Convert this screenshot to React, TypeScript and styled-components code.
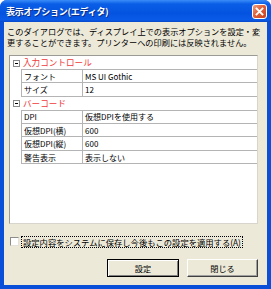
import React from "react";
import styled, { createGlobalStyle } from "styled-components";

const Global = createGlobalStyle`
  html, body { margin: 0; padding: 0; background: #ffffff; }
  body { font-family: "Noto Sans CJK JP", "Noto Sans", sans-serif; }
`;

const Frame = styled.div`
  width: 271px;
  height: 289px;
  box-sizing: border-box;
  display: flex;
  flex-direction: column;
  background: #0a4fd8;
  border-radius: 7px 7px 0 0;
  overflow: hidden;
`;

const TitleBar = styled.div`
  height: 22px;
  flex: none;
  display: flex;
  align-items: center;
  justify-content: space-between;
  padding: 0 4px 0 6px;
  background: linear-gradient(to bottom, #3a8cf8 0%, #0a5ee6 18%, #0453e0 60%, #0a5ae8 90%, #0848c8 100%);
`;

const Title = styled.span`
  color: #ffffff;
  font-size: 9px;
  font-weight: bold;
  letter-spacing: -0.2px;
  text-shadow: 1px 1px 0 #0a2f8a;
  line-height: 1;
  margin-top: 1px;
`;

const CloseButton = styled.div`
  width: 15px;
  height: 15px;
  box-sizing: border-box;
  border: 1px solid #ffffff;
  border-radius: 3px;
  background: linear-gradient(to bottom right, #f0a080 0%, #e0603a 45%, #c8401c 100%);
  display: flex;
  align-items: center;
  justify-content: center;
  margin-top: 1px;
`;

const Client = styled.div`
  flex: 1;
  margin: 0 4px 4px 4px;
  background: #ece9d8;
  display: flex;
  flex-direction: column;
  padding: 0 9px 0 0;
`;

const Description = styled.div`
  margin: 4px 0 0 3px;
  display: flex;
  flex-direction: column;
`;

const DescLine = styled.span`
  display: block;
  font-size: 8.2px;
  line-height: 11px;
  height: 11px;
  color: #000000;
  white-space: nowrap;
`;

const Grid = styled.div`
  margin: 7px 0 0 5px;
  height: 169px;
  box-sizing: border-box;
  background: #ffffff;
  border: 1px solid #9c9a94;
  border-right-color: #d8d6cc;
  border-bottom-color: #d8d6cc;
  display: flex;
  flex-direction: column;
`;

const Row = styled.div`
  display: grid;
  grid-template-columns: 11px 61px 1fr;
  height: 13.5px;
  flex: none;
`;

const Margin = styled.div`
  display: flex;
  align-items: center;
  justify-content: flex-end;
  padding-right: 1px;
`;

const Toggle = styled.div`
  width: 7px;
  height: 7px;
  box-sizing: border-box;
  border: 1px solid #8a8a8a;
  background: #ffffff;
  position: relative;
  &::after {
    content: "";
    position: absolute;
    left: 1px;
    top: 2px;
    width: 3px;
    height: 1px;
    background: #000;
  }
`;

const CategoryLabel = styled.div`
  grid-column: 2 / 4;
  color: #f03a3a;
  font-size: 8.6px;
  line-height: 13px;
  padding-left: 2px;
  border-bottom: 1px solid #b4b4b4;
`;

const Cell = styled.div`
  font-size: 8px;
  line-height: 13px;
  padding-left: 2px;
  color: #000;
  white-space: nowrap;
  overflow: hidden;
  border-bottom: 1px solid #b4b4b4;
  border-left: 1px solid #b4b4b4;
`;

const CheckRow = styled.div`
  margin: 12px 0 0 6px;
  display: flex;
  align-items: center;
  gap: 3px;
  height: 11px;
`;

const CheckBox = styled.div`
  width: 9px;
  height: 9px;
  box-sizing: border-box;
  background: #ffffff;
  border: 1px solid #8c8c8c;
  border-right-color: #e4e2da;
  border-bottom-color: #e4e2da;
`;

const CheckLabel = styled.span`
  font-size: 8.3px;
  line-height: 10px;
  color: #000;
  white-space: nowrap;
  outline: 1px dotted #000;
  padding: 0 1px;
`;

const ButtonRow = styled.div`
  margin-top: 12px;
  display: flex;
  justify-content: flex-end;
  gap: 8px;
`;

const Button = styled.div<{ $default?: boolean }>`
  width: ${(p) => (p.$default ? "72px" : "71px")};
  height: 18px;
  box-sizing: border-box;
  display: flex;
  align-items: center;
  justify-content: center;
  font-size: 8.2px;
  color: #000;
  background: #ece9d8;
  border: 1px solid;
  border-color: ${(p) => (p.$default ? "#000000" : "#ffffff #404040 #404040 #ffffff")};
  box-shadow: ${(p) =>
    p.$default
      ? "inset 1px 1px 0 #ffffff, inset -1px -1px 0 #808080"
      : "inset -1px -1px 0 #a0a0a0"};
`;

type Prop = { name: string; value: string };
const sections: { title: string; props: Prop[] }[] = [
  {
    title: "入力コントロール",
    props: [
      { name: "フォント", value: "MS UI Gothic" },
      { name: "サイズ", value: "12" },
    ],
  },
  {
    title: "バーコード",
    props: [
      { name: "DPI", value: "仮想DPIを使用する" },
      { name: "仮想DPI(横)", value: "600" },
      { name: "仮想DPI(縦)", value: "600" },
      { name: "警告表示", value: "表示しない" },
    ],
  },
];

export default function App() {
  return (
    <>
      <Global />
      <Frame>
        <TitleBar>
          <Title>表示オプション(エディタ)</Title>
          <CloseButton>
            <svg width="9" height="9" viewBox="0 0 9 9">
              <path d="M1.5 1.5 L7.5 7.5 M7.5 1.5 L1.5 7.5" stroke="#ffffff" strokeWidth="1.8" strokeLinecap="square" />
            </svg>
          </CloseButton>
        </TitleBar>
        <Client>
          <Description>
            <DescLine>このダイアログでは、ディスプレイ上での表示オプションを設定・変</DescLine>
            <DescLine>更することができます。プリンターへの印刷には反映されません。</DescLine>
          </Description>
          <Grid>
            {sections.map((s) => (
              <React.Fragment key={s.title}>
                <Row>
                  <Margin>
                    <Toggle />
                  </Margin>
                  <CategoryLabel>{s.title}</CategoryLabel>
                </Row>
                {s.props.map((p) => (
                  <Row key={p.name}>
                    <Margin />
                    <Cell>{p.name}</Cell>
                    <Cell>{p.value}</Cell>
                  </Row>
                ))}
              </React.Fragment>
            ))}
          </Grid>
          <CheckRow>
            <CheckBox />
            <CheckLabel>設定内容をシステムに保存し今後もこの設定を適用する(A)</CheckLabel>
          </CheckRow>
          <ButtonRow>
            <Button $default>設定</Button>
            <Button>閉じる</Button>
          </ButtonRow>
        </Client>
      </Frame>
    </>
  );
}
